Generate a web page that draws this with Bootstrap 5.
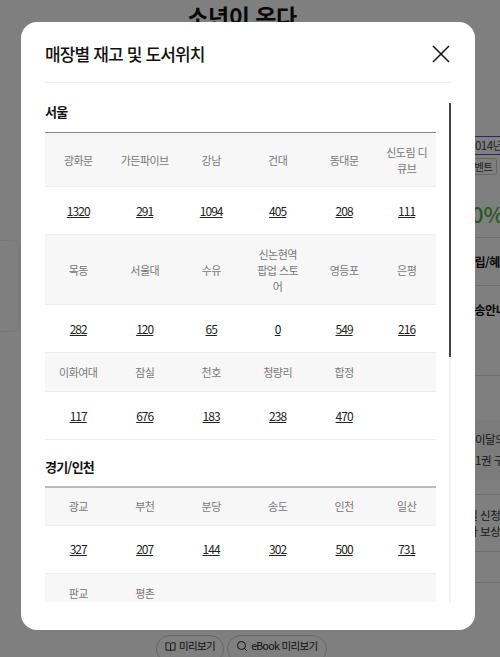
<!DOCTYPE html>
<html lang="ko">
<head>
<meta charset="utf-8">
<link href="https://cdn.jsdelivr.net/npm/bootstrap@5.3.0/dist/css/bootstrap.min.css" rel="stylesheet">
<style>
html,body{height:100%;overflow:hidden}
body{font-family:"Noto Sans CJK KR","Noto Sans",sans-serif;color:#222;background:#fff;letter-spacing:-.03em}
.page-stage{position:relative;width:500px;height:657px;overflow:hidden}
.book-title{font-size:23px;font-weight:700;text-align:center;line-height:30px;height:30px;margin:0;padding:1px 16px 0 0;color:#111}
.under-body{height:605px;overflow:hidden}
.left-rail{width:20px;overflow:hidden;flex:none}
.left-box{width:40px;margin:210px 0 0 -20px;height:92px;border:1px solid #eee;border-radius:8px}
.right-rail{width:60px;flex:none;overflow:hidden;white-space:nowrap;font-size:11.5px;color:#333}
.rail-date{margin-top:106px;height:19px;border-top:1px solid #5a57a8;border-bottom:1px solid #5a57a8;padding-left:29px;line-height:17px;color:#444;font-size:11.5px}
.rail-chips{margin:3px 0 0 20px;height:17px;gap:3px}
.rail-chip{border:1px solid #ccc;border-radius:2px;line-height:15px;padding:0 3px 0 4px;font-size:10.5px;color:#444;flex:none}
.rail-pct{height:63px;padding:23px 0 0 6px;line-height:30px;font-size:22px;font-weight:500;color:#4db53a;border-bottom:1px solid #ddd;letter-spacing:0}
.rail-strong{height:48px;line-height:47px;padding-left:24px;font-size:12px;font-weight:700;color:#111;border-bottom:1px solid #ddd}
.rail-tall{height:90px;line-height:24px;padding-top:12px}
.rail-gap{height:44px}
.rail-panel{height:60px;padding:9px 0 0 35px;line-height:21px;background:#f6f6f6}
.rail-tail{height:15px;border-bottom:1px solid #ddd}
.rail-note{height:57px;padding:12px 0 0 7px;line-height:16px;border-bottom:1px solid #ddd}
.rail-end{height:31px;border-bottom:1px solid #ddd}
.pill-row{gap:3px;padding-left:156px}
.preview-pill{height:28px;border:1px solid #ccc;border-radius:14px;padding:0 8px 6px;font-size:10.5px;gap:3px;color:#222;background:#fff;white-space:nowrap;letter-spacing:-.06em}
.scrim{position:absolute;inset:0;background:rgba(0,0,0,.5)}
.stock-modal{position:absolute;left:21px;top:22px;width:454px;height:608px;background:#fff;border-radius:16px;padding:12px 24px 28px}
.stock-head{height:49px;padding-bottom:9px;border-bottom:1px solid #f0f0f0}
.stock-title{font-size:17px;font-weight:500;margin:0;color:#111;line-height:24px;letter-spacing:-.05em}
.close-x{width:20px;height:20px;padding:0;background:none;border:0;display:block;margin-top:1px}
.close-x svg{display:block}
.stock-scroll{height:499px;margin-top:20px;overflow:hidden;position:relative;padding-right:15px}
.scroll-track{position:absolute;right:0;top:0;bottom:0;width:2px;background:#f3f3f3}
.scroll-thumb{position:absolute;right:0;top:0;height:254px;width:2px;background:#444}
.region-name{font-size:13px;font-weight:700;color:#111;margin:0;line-height:18px;padding-bottom:11px;letter-spacing:-.06em}
.region-next{margin-top:18px;padding-bottom:10px}
.stock-grid{table-layout:fixed;width:391px;margin:0;border-top:1px solid #888}
.stock-grid.lighter{border-top:2px solid #bbb}
.stock-grid th,.stock-grid td{text-align:center;vertical-align:middle;padding:0 8px;font-size:11px;line-height:16px;border-bottom:1px solid #eee;letter-spacing:-.05em}
.stock-grid th{background:#f7f7f7;color:#777;font-weight:400;height:39px}
.stock-grid tr.two-line th{height:54px}
.stock-grid tr.three-line th{height:70px}
.stock-grid tr.short-line th{height:38px}
.stock-grid td{font-size:12px;color:#222;height:48px;letter-spacing:-.08em}
.stock-grid td a{color:#222}
.wide-col{width:17%}
.last-col{width:15%}
</style>
</head>
<body>
<div class="page-stage">
  <h1 class="book-title">소년이 온다</h1>
  <div class="under-body d-flex justify-content-between">
    <div class="left-rail"><div class="left-box"></div></div>
    <div class="right-rail">
      <div class="rail-date">2014년 05월 19일</div>
      <div class="rail-chips d-flex"><span class="rail-chip">이벤트</span><span class="rail-chip">소득</span></div>
      <div class="rail-pct">100%</div>
      <div class="rail-strong">적립/혜택</div>
      <div class="rail-strong rail-tall">배송안내</div>
      <div class="rail-gap"></div>
      <div class="rail-panel">이달의 책<br>1권 구매</div>
      <div class="rail-tail"></div>
      <div class="rail-note">수령일 신청<br>재평가 보상</div>
      <div class="rail-end"></div>
    </div>
  </div>
  <div class="pill-row d-flex">
    <span class="preview-pill d-inline-flex align-items-center">
      <svg width="11" height="11" viewBox="0 0 12 12" fill="none" stroke="#222"><path d="M1 2h4l1 1 1-1h4v8H7l-1 1-1-1H1zM6 3v8"/></svg>미리보기</span>
    <span class="preview-pill d-inline-flex align-items-center">
      <svg width="12" height="12" viewBox="0 0 12 12" fill="none" stroke="#222"><circle cx="5.5" cy="5.5" r="4"/><path d="M8.5 8.5l2.5 2.5"/></svg>eBook 미리보기</span>
  </div>
  <div class="scrim"></div>
  <div class="stock-modal">
    <div class="stock-head d-flex justify-content-between align-items-center">
      <h2 class="stock-title">매장별 재고 및 도서위치</h2>
      <button class="close-x" aria-label="닫기"><svg width="20" height="20" viewBox="0 0 20 20" fill="none" stroke="#111" stroke-width="1.5"><path d="M2 2l16 16M18 2L2 18"/></svg></button>
    </div>
    <div class="stock-scroll">
      <div class="scroll-track"></div><div class="scroll-thumb"></div>
      <p class="region-name">서울</p>
      <table class="table stock-grid">
        <colgroup><col class="wide-col"><col class="wide-col"><col class="wide-col"><col class="wide-col"><col class="wide-col"><col class="last-col"></colgroup>
        <tbody>
        <tr class="two-line"><th>광화문</th><th>가든파이브</th><th>강남</th><th>건대</th><th>동대문</th><th>신도림 디<br>큐브</th></tr>
        <tr><td><a href="#">1320</a></td><td><a href="#">291</a></td><td><a href="#">1094</a></td><td><a href="#">405</a></td><td><a href="#">208</a></td><td><a href="#">111</a></td></tr>
        <tr class="three-line"><th>목동</th><th>서울대</th><th>수유</th><th>신논현역<br>팝업 스토<br>어</th><th>영등포</th><th>은평</th></tr>
        <tr><td><a href="#">282</a></td><td><a href="#">120</a></td><td><a href="#">65</a></td><td><a href="#">0</a></td><td><a href="#">549</a></td><td><a href="#">216</a></td></tr>
        <tr><th>이화여대</th><th>잠실</th><th>천호</th><th>청량리</th><th>합정</th><th></th></tr>
        <tr><td><a href="#">117</a></td><td><a href="#">676</a></td><td><a href="#">183</a></td><td><a href="#">238</a></td><td><a href="#">470</a></td><td></td></tr>
        </tbody>
      </table>
      <p class="region-name region-next">경기/인천</p>
      <table class="table stock-grid lighter">
        <colgroup><col class="wide-col"><col class="wide-col"><col class="wide-col"><col class="wide-col"><col class="wide-col"><col class="last-col"></colgroup>
        <tbody>
        <tr class="short-line"><th>광교</th><th>부천</th><th>분당</th><th>송도</th><th>인천</th><th>일산</th></tr>
        <tr><td><a href="#">327</a></td><td><a href="#">207</a></td><td><a href="#">144</a></td><td><a href="#">302</a></td><td><a href="#">500</a></td><td><a href="#">731</a></td></tr>
        <tr><th>판교</th><th>평촌</th><th></th><th></th><th></th><th></th></tr>
        </tbody>
      </table>
    </div>
  </div>
</div>
<script src="https://cdn.jsdelivr.net/npm/bootstrap@5.3.0/dist/js/bootstrap.bundle.min.js"></script>
</body>
</html>
